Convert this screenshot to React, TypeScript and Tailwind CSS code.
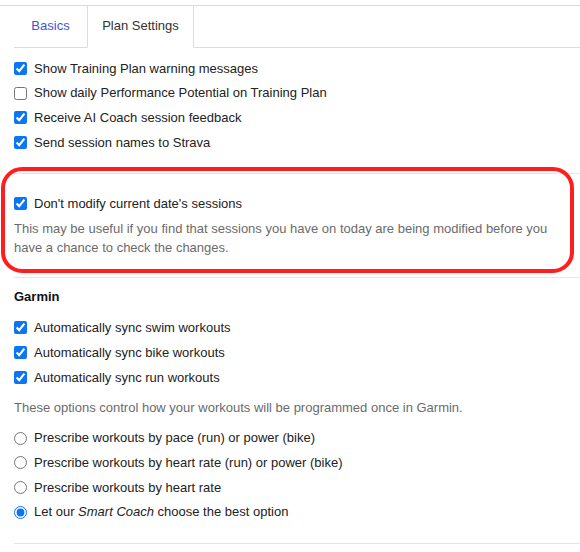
import { ReactNode } from 'react'

const font = { fontFamily: '"Liberation Sans", Arial, Helvetica, sans-serif' }

const CheckRow = ({ checked, children }: { checked?: boolean; children: ReactNode }) => (
	<label className="flex h-[25px] items-center gap-[7px] text-[13px] text-[#222]">
		<input
			type="checkbox"
			defaultChecked={checked}
			className="m-0 h-[13px] w-[13px] accent-[#0b75f4]"
		/>
		<span>{children}</span>
	</label>
)

const RadioRow = ({ checked, children }: { checked?: boolean; children: ReactNode }) => (
	<label className="flex h-[25px] items-center gap-[7px] text-[13px] text-[#222]">
		<input
			type="radio"
			name="prescribe"
			defaultChecked={checked}
			className="m-0 h-[13px] w-[13px] accent-[#0b75f4]"
		/>
		<span>{children}</span>
	</label>
)

export default function App() {
	return (
		<div className="relative h-[552px] w-[580px] overflow-hidden bg-white" style={font}>
			<div className="mt-[5px] border-t border-[#dcdcdc]">
				{/* Tabs */}
				<div className="ml-[14px] flex h-[42px] border-b border-[#dcdcdc]">
					<button className="flex w-[73px] items-center justify-center pb-[2px] text-[13px] text-[#3e55d6]">
						Basics
					</button>
					<button className="-mb-px flex w-[107px] items-center justify-center border-x border-b border-x-[#dcdcdc] border-b-white bg-white pb-[2px] text-[13px] text-[#333]">
						Plan Settings
					</button>
				</div>

				<div className="pl-[14px]">
					{/* General */}
					<div className="border-b border-[#e6e6e6] pt-[8px] pb-[18px] [&>label]:h-[24.7px]">
						<CheckRow checked>Show Training Plan warning messages</CheckRow>
						<CheckRow>Show daily Performance Potential on Training Plan</CheckRow>
						<CheckRow checked>Receive AI Coach session feedback</CheckRow>
						<CheckRow checked>Send session names to Strava</CheckRow>
					</div>

					{/* Current date */}
					<div className="border-b border-[#e6e6e6] pt-[17px] pb-[20px]">
						<CheckRow checked>Don't modify current date's sessions</CheckRow>
						<p className="mt-[3px] pr-[20px] text-[13px] leading-[19px] text-[#6b6b6b]">
							This may be useful if you find that sessions you have on today are being modified before you
							have a chance to check the changes.
						</p>
					</div>

					{/* Garmin */}
					<div className="border-b border-[#e6e6e6] pt-[10px] pb-[18px]">
						<h3 className="text-[13px] leading-[18px] font-bold text-[#111]">Garmin</h3>
						<div className="mt-[9px]">
							<CheckRow checked>Automatically sync swim workouts</CheckRow>
							<CheckRow checked>Automatically sync bike workouts</CheckRow>
							<CheckRow checked>Automatically sync run workouts</CheckRow>
						</div>
						<p className="mt-[8px] text-[13px] leading-[19px] text-[#6b6b6b]">
							These options control how your workouts will be programmed once in Garmin.
						</p>
						<div className="mt-[9px] [&>label]:h-[24.7px]">
							<RadioRow>Prescribe workouts by pace (run) or power (bike)</RadioRow>
							<RadioRow>Prescribe workouts by heart rate (run) or power (bike)</RadioRow>
							<RadioRow>Prescribe workouts by heart rate</RadioRow>
							<RadioRow checked>
								Let our <em>Smart Coach</em> choose the best option
							</RadioRow>
						</div>
					</div>
				</div>
			</div>

			{/* Highlight annotation */}
			<div className="pointer-events-none absolute top-[167px] left-[1px] h-[106px] w-[573px] rounded-[21px] border-4 border-[#ff1e1e]" />
		</div>
	)
}
